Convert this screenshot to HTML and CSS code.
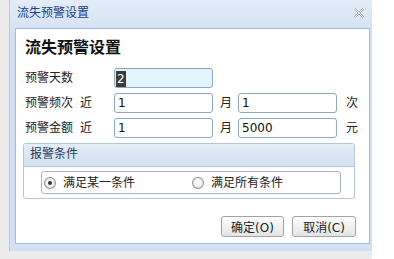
FILE: index.html
```html
<!DOCTYPE html>
<html>
<head>
    <link rel="stylesheet" href="styles.css">
</head>
<body>
    <div class="stage">
        <div class="dialog">
            <div class="titlebar">
                <span class="title">流失预警设置</span>
                <svg class="close" width="10" height="10" viewBox="0 0 10 10">
                    <polygon points="0.5,1.5 1.5,0.5 5,4 8.5,0.5 9.5,1.5 6,5 9.5,8.5 8.5,9.5 5,6 1.5,9.5 0.5,8.5 4,5" fill="#f4f7fb" stroke="#9aa6b4" stroke-width="0.9"/>
                </svg>
            </div>
            <div class="panel">
                <h1>流失预警设置</h1>
                <div class="form">
                    <label>预警天数</label>
                    <div class="field focus"><span class="sel">2</span></div>
                    <span></span><span></span><span></span>

                    <label>预警频次<span class="near">近</span></label>
                    <input type="text" value="1">
                    <span class="unit">月</span>
                    <input type="text" value="1">
                    <span class="unit end">次</span>

                    <label>预警金额<span class="near">近</span></label>
                    <input type="text" value="1">
                    <span class="unit">月</span>
                    <input type="text" value="5000">
                    <span class="unit end">元</span>
                </div>

                <div class="fieldset">
                    <div class="legend">报警条件</div>
                    <div class="radios">
                        <span class="radio checked"></span>
                        <span class="radio-label">满足某一条件</span>
                        <span class="radio"></span>
                        <span class="radio-label">满足所有条件</span>
                    </div>
                </div>

                <div class="buttons">
                    <button class="ok">确定(O)</button>
                    <button class="cancel">取消(C)</button>
                </div>
            </div>
        </div>
    </div>
</body>
</html>
```

FILE: styles.css
```css
body {
    margin: 0;
    background: #ffffff;
    font-family: "Liberation Sans", "Noto Sans CJK SC", sans-serif;
    font-size: 12px;
    color: #222;
}
.stage {
    width: 363px;
    height: 259px;
    padding-left: 9px;
    background: #ececec;
}
.dialog {
    box-sizing: border-box;
    width: 363px;
    height: 251px;
    background: #d3e1f2;
    border-left: 1px solid #b6c9e0;
    padding: 0 2px 0 5px;
}
.titlebar {
    height: 28px;
    margin: 0 -2px 0 -5px;
    padding-left: 7px;
    padding-right: 8px;
    display: flex;
    align-items: center;
    justify-content: space-between;
    background: linear-gradient(#e4edf8, #d5e3f3);
}
.title {
    color: #15428b;
    font-size: 12px;
    line-height: 14px;
    margin-top: -2px;
}
.close {
    margin-top: -2px;
}
.panel {
    box-sizing: border-box;
    height: 216px;
    background: #ffffff;
    border: 1px solid #9fbde3;
    padding: 9px 13px 0 8px;
}
h1 {
    margin: 0 0 10px 1px;
    font-size: 16px;
    line-height: 20px;
    font-weight: bold;
    color: #111;
}
.form {
    display: grid;
    grid-template-columns: 90px 99px 25px 99px auto;
    grid-auto-rows: 20px;
    row-gap: 5px;
    align-items: center;
}
.form label {
    padding-left: 1px;
    line-height: 20px;
}
.near {
    margin-left: 7px;
}
.form input,
.field {
    box-sizing: border-box;
    width: 99px;
    height: 20px;
    margin: 0;
    padding: 0 3px;
    border: 1px solid #8ea6be;
    border-radius: 3px;
    font-family: "DejaVu Sans", sans-serif;
    font-size: 12px;
    color: #111;
    background: #fff;
    outline: none;
}
.field.focus {
    background: #e2f4fd;
    display: flex;
    align-items: center;
    padding-left: 1px;
}
.sel {
    background: #3b3b3b;
    color: #fff;
    line-height: 16px;
    padding: 0 1px;
    margin-top: 1px;
}
.unit {
    padding-left: 7px;
    line-height: 20px;
}
.unit.end {
    padding-left: 9px;
}
.fieldset {
    box-sizing: border-box;
    width: 332px;
    height: 56px;
    margin: 5px 0 0 -1px;
    border: 1px solid #b3c6dc;
    border-radius: 3px;
}
.legend {
    height: 22px;
    line-height: 21px;
    padding-left: 6px;
    color: #2a3b55;
    background: linear-gradient(#e4edf8, #d2e0f1);
    border-bottom: 1px solid #b3c6dc;
}
.radios {
    box-sizing: border-box;
    height: 23px;
    margin: 4px 13px 0 17px;
    border: 1px solid #a6b6c8;
    border-radius: 3px;
    display: flex;
    align-items: center;
    padding-left: 2px;
}
.radio {
    box-sizing: border-box;
    width: 12px;
    height: 12px;
    border-radius: 50%;
    border: 1px solid #8f8f8f;
    background: radial-gradient(circle at 50% 40%, #ffffff, #dedede);
    display: flex;
    align-items: center;
    justify-content: center;
}
.radio.checked::after {
    content: "";
    width: 4px;
    height: 4px;
    border-radius: 50%;
    background: #333;
}
.radio-label {
    margin-left: 7px;
    width: 130px;
    line-height: 16px;
}
.buttons {
    display: flex;
    justify-content: flex-end;
    gap: 8px;
    margin-top: 17px;
}
.buttons button {
    box-sizing: border-box;
    height: 21px;
    padding: 0;
    border: 1px solid #a3a3a3;
    border-radius: 3px;
    background: linear-gradient(#fdfdfd, #e4e4e4);
    font-family: "DejaVu Sans", "Noto Sans CJK SC", sans-serif;
    font-size: 12px;
    color: #222;
}
.ok {
    width: 63px;
}
.cancel {
    width: 64px;
}
```
